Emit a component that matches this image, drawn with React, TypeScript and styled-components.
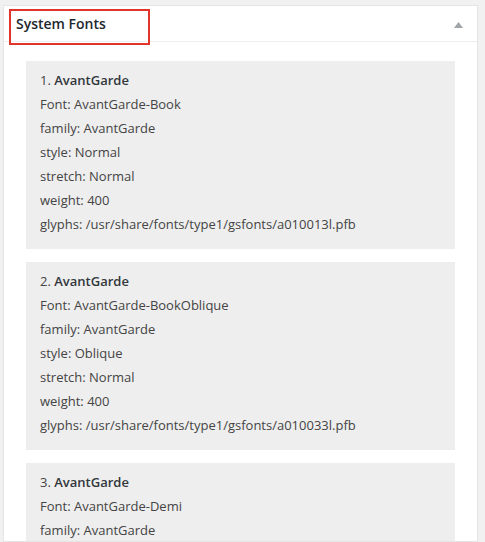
import React from 'react';
import styled, {createGlobalStyle} from 'styled-components';

const GlobalStyle = createGlobalStyle`
  html, body {
    margin: 0;
    padding: 0;
    background: #f1f1f1;
    overflow: hidden;
  }
  body {
    font-family: "Open Sans", "Noto Sans", sans-serif;
    color: #444;
  }
`;

type FontItem = {
  family: string;
  font: string;
  style: string;
  stretch: string;
  weight: number;
  glyphs: string;
};

const fonts: FontItem[] = [
  {
    family: 'AvantGarde',
    font: 'AvantGarde-Book',
    style: 'Normal',
    stretch: 'Normal',
    weight: 400,
    glyphs: '/usr/share/fonts/type1/gsfonts/a010013l.pfb',
  },
  {
    family: 'AvantGarde',
    font: 'AvantGarde-BookOblique',
    style: 'Oblique',
    stretch: 'Normal',
    weight: 400,
    glyphs: '/usr/share/fonts/type1/gsfonts/a010033l.pfb',
  },
  {
    family: 'AvantGarde',
    font: 'AvantGarde-Demi',
    style: 'Normal',
    stretch: 'Normal',
    weight: 600,
    glyphs: '/usr/share/fonts/type1/gsfonts/a010015l.pfb',
  },
];

function FontCard({item, index}: {item: FontItem; index: number}) {
  return (
    <Card.Wrapper>
      <Card.Line>
        {index + 1}. <b>{item.family}</b>
      </Card.Line>
      <Card.Line>Font: {item.font}</Card.Line>
      <Card.Line>family: {item.family}</Card.Line>
      <Card.Line>style: {item.style}</Card.Line>
      <Card.Line>stretch: {item.stretch}</Card.Line>
      <Card.Line>weight: {item.weight}</Card.Line>
      <Card.Line>glyphs: {item.glyphs}</Card.Line>
    </Card.Wrapper>
  );
}

function App() {
  return (
    <>
      <GlobalStyle />
      <Panel.Wrapper>
        <Panel.Header>
          <Panel.Title>System Fonts</Panel.Title>
          <Panel.Toggle>
            <svg width="9" height="6" viewBox="0 0 9 6">
              <polygon points="4.5,0 9,6 0,6" fill="#a0a5aa" />
            </svg>
          </Panel.Toggle>
          <Panel.Highlight />
        </Panel.Header>
        <Panel.Body>
          {fonts.map((item, i) => (
            <FontCard key={item.font} item={item} index={i} />
          ))}
        </Panel.Body>
      </Panel.Wrapper>
    </>
  );
}

export default App;

const Panel = {
  Wrapper: styled.div`
    margin: 5px 7px 0 3px;
    background: #fff;
    border: 1px solid #e5e5e5;
    height: calc(100vh - 5px);
    box-sizing: border-box;
    overflow: hidden;
  `,
  Header: styled.div`
    position: relative;
    display: flex;
    align-items: center;
    justify-content: space-between;
    height: 35px;
    padding: 0 14px 0 12px;
    border-bottom: 1px solid #eee;
  `,
  Title: styled.h2`
    margin: 0;
    font-size: 14px;
    font-weight: 600;
    color: #23282d;
    line-height: 1.4;
  `,
  Toggle: styled.span`
    display: flex;
    align-items: center;
    margin-top: 2px;
  `,
  Highlight: styled.div`
    position: absolute;
    left: 5px;
    top: 3px;
    width: 137px;
    height: 32px;
    border: 2px solid #e1352b;
    pointer-events: none;
  `,
  Body: styled.div`
    display: flex;
    flex-direction: column;
    gap: 13px;
    padding: 19px 22px 0 22px;
  `,
};

const Card = {
  Wrapper: styled.div`
    background: #eee;
    padding: 7px 14px 13px;
  `,
  Line: styled.div`
    font-size: 13px;
    line-height: 24px;
    color: #444;
    white-space: nowrap;

    & b {
      font-weight: 600;
      color: #32373c;
    }
  `,
};
